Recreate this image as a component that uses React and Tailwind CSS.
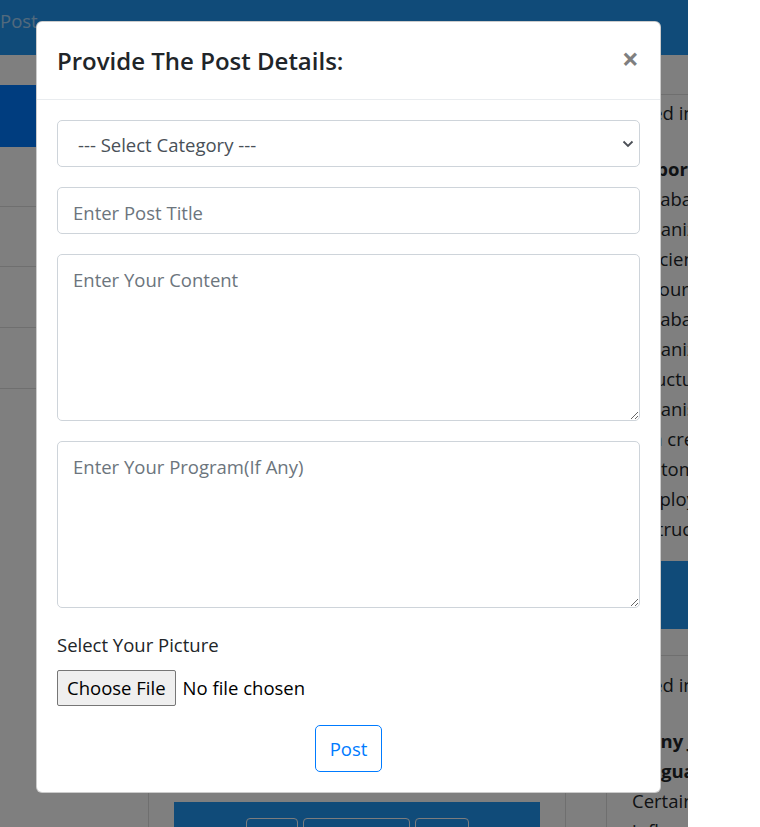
const topLines = [
  "database",
  "organized",
  "efficient",
  "resources",
  "database",
  "organization",
  "structured",
  "organised",
  "can create",
  "customer",
  "employee",
  "instructions",
];

export default function App() {
  return (
    <div className="h-[827px] w-[760px] overflow-hidden bg-white">
      <div className="relative h-[827px] w-[688px] overflow-hidden bg-white font-['Open_Sans',sans-serif] text-[18.5px] leading-[30px] text-[#212529]">
        {/* page behind the dialog */}
        <nav className="h-[55px] bg-[#2196f3] pt-[6px]">
          <span className="text-white/60">Post</span>
        </nav>

        <div className="flex">
          <aside className="w-[148px] pt-[30px]">
            <div className="h-[62px] bg-[#007bff]" />
            <div className="h-[60px] border-b border-black/[0.125]" />
            <div className="h-[60px] border-b border-black/[0.125]" />
            <div className="h-[61px] border-b border-black/[0.125]" />
            <div className="h-[61px] border-b border-black/[0.125]" />
          </aside>

          <main className="w-[418px] border-x border-black/[0.125] px-[25px]">
            <div className="h-[747px]" />
            <div className="flex h-[60px] justify-center gap-[5px] bg-[#2196f3] pt-[16px]">
              <button className="h-[40px] w-[52px] rounded-[4px] border border-[#f8f9fa]" />
              <button className="h-[40px] w-[107px] rounded-[4px] border border-[#f8f9fa]" />
              <button className="h-[40px] w-[54px] rounded-[4px] border border-[#f8f9fa]" />
            </div>
          </main>

          <div className="w-[40px]" />

          <section className="w-[82px] border-l border-black/[0.125] whitespace-nowrap">
            <div className="h-[40px] border-b border-black/[0.125]" />
            <div className="pl-[25px] pt-[3px]">
              <p>used important</p>
              <p className="mt-[26px] font-bold">Importance</p>
              {topLines.map((w, i) => (
                <p key={i}>{w}</p>
              ))}
            </div>
            <div className="mt-[17px] h-[68px] bg-[#2196f3]" />
            <div className="h-[27px] border-b border-black/[0.125]" />
            <div className="pl-[25px] pt-[14px]">
              <p>used important</p>
              <p className="mt-[26px] font-bold">Many Java</p>
              <p className="font-bold">language</p>
              <p>Certain</p>
              <p>influence</p>
            </div>
          </section>
        </div>

        {/* backdrop */}
        <div className="absolute inset-0 bg-black/50" />

        {/* dialog */}
        <div className="absolute left-[36px] top-[21px] w-[625px] rounded-[6px] border border-black/20 bg-white">
          <div className="flex h-[78px] items-center justify-between border-b border-[#e9ecef] pl-[20px] pr-[21px]">
            <h5 className="text-[24px] font-semibold leading-[36px] text-[#212529]">
              Provide The Post Details:
            </h5>
            <button className="-mt-[3px] text-[30px] font-bold leading-none text-black/50">×</button>
          </div>

          <form className="p-[20px]">
            <div className="relative mb-[20px]">
              <select className="block h-[47px] w-full appearance-none rounded-[5px] border border-[#ced4da] bg-white pl-[20px] pt-[2px] text-[#495057]">
                <option>--- Select Category ---</option>
              </select>
              <svg
                className="pointer-events-none absolute right-[6px] top-1/2 -translate-y-1/2"
                width="12"
                height="8"
                viewBox="0 0 12 8"
                fill="none"
                stroke="#4b4f56"
                strokeWidth="1.8"
              >
                <path d="M1.5 1.5l4.5 4.5 4.5-4.5" />
              </svg>
            </div>

            <input
              type="text"
              placeholder="Enter Post Title"
              className="mb-[20px] block h-[47px] w-full rounded-[5px] border border-[#ced4da] px-[15px] pt-[3px] text-[#495057] placeholder:text-[#6c757d]"
            />

            <textarea
              placeholder="Enter Your Content"
              className="mb-[20px] block h-[167px] w-full resize-y rounded-[5px] border border-[#ced4da] px-[15px] pb-[8px] pt-[10px] text-[#495057] placeholder:text-[#6c757d]"
            />

            <textarea
              placeholder="Enter Your Program(If Any)"
              className="mb-[20px] block h-[167px] w-full resize-y rounded-[5px] border border-[#ced4da] px-[15px] pb-[8px] pt-[10px] text-[#495057] placeholder:text-[#6c757d]"
            />

            <label className="mb-[10px] block pt-[2px]">Select Your Picture</label>
            <input
              type="file"
              className="block w-full text-black file:mr-[7px] file:rounded-[2px] file:border file:border-[#767676] file:bg-[#efefef] file:px-[9px] file:py-[2px] file:text-black"
            />

            <div className="mt-[19px] text-center">
              <button
                type="button"
                className="rounded-[5px] border border-[#007bff] px-[14px] pb-[7px] pt-[8px] text-[#007bff]"
              >
                Post
              </button>
            </div>
          </form>
        </div>
      </div>
    </div>
  );
}
